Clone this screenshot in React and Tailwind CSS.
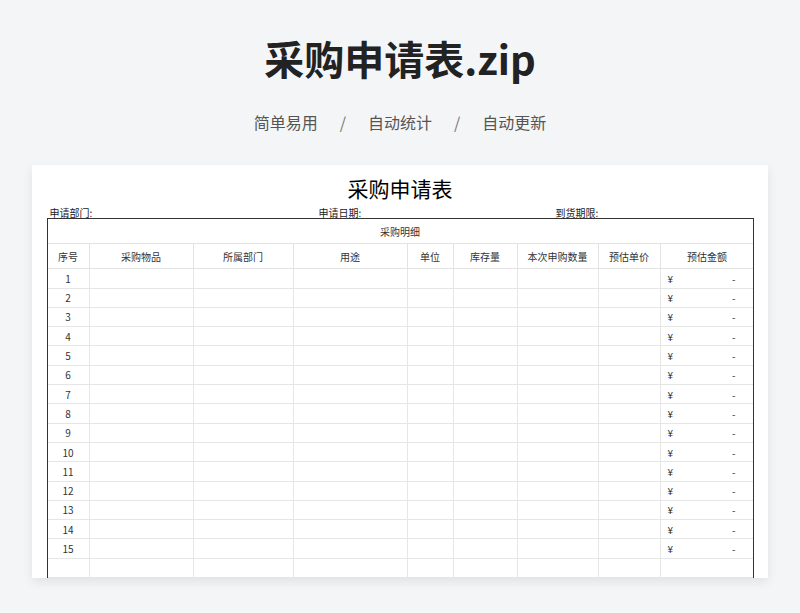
const cols = [
  { label: '序号', w: 42 },
  { label: '采购物品', w: 104 },
  { label: '所属部门', w: 100 },
  { label: '用途', w: 114 },
  { label: '单位', w: 46 },
  { label: '库存量', w: 64 },
  { label: '本次申购数量', w: 81 },
  { label: '预估单价', w: 62 },
  { label: '预估金额', w: 93 },
];

const rows = Array.from({ length: 16 }, (_, i) => i + 1);

export default function App() {
  return (
    <div
      className="w-[800px] h-[613px] overflow-hidden bg-[#f4f5f7] flex flex-col items-center"
      style={{ fontFamily: '"Noto Sans CJK SC", "Noto Sans", sans-serif' }}
    >
      <h1 className="mt-[32px] h-[52px] text-[40px] leading-[52px] font-bold text-[#222]">采购申请表.zip</h1>
      <div className="mt-[26px] flex items-center gap-[22px] text-[16px] leading-[24px] text-[#555]">
        <span>简单易用</span>
        <span className="text-[#777]">/</span>
        <span>自动统计</span>
        <span className="text-[#777]">/</span>
        <span>自动更新</span>
      </div>
      <div className="mt-[31px] w-[736px] h-[413px] bg-white shadow-[0_4px_10px_rgba(0,0,0,0.08)] flex flex-col items-center overflow-hidden">
        <div className="mt-[8px] h-[30px] text-[21px] leading-[30px] text-black">采购申请表</div>
        <div className="w-[707px] h-[19px] relative text-[10px] leading-[19px] text-[#222]">
          <span className="absolute left-[3px]">申请部门:</span>
          <span className="absolute left-[272px]">申请日期:</span>
          <span className="absolute left-[509px]">到货期限:</span>
        </div>
        <div className="mt-[1px] w-[707px] border-x border-t border-[#333] text-[10px] text-[#333]">
          <div className="h-[25px] flex items-center justify-center border-b border-[#e3e3e3]">采购明细</div>
          <div className="flex h-[25px] border-b border-[#e3e3e3]">
            {cols.map((c, i) => (
              <div
                key={c.label}
                className={`flex items-center justify-center shrink-0 ${i < cols.length - 1 ? 'border-r border-[#e3e3e3]' : ''}`}
                style={{ width: c.w }}
              >
                {c.label}
              </div>
            ))}
          </div>
          {rows.map((n) => (
            <div key={n} className="flex h-[19.3px] border-b border-[#e6e6e6]">
              {cols.map((c, i) => (
                <div
                  key={c.label}
                  className={`flex items-center shrink-0 ${i < cols.length - 1 ? 'border-r border-[#e6e6e6]' : ''} ${i === 0 ? 'justify-center' : ''} ${i === 8 ? 'justify-between pl-[7px] pr-[18px]' : ''}`}
                  style={{ width: c.w }}
                >
                  {i === 0 && n <= 15 ? n : null}
                  {i === 8 && n <= 15 ? (
                    <>
                      <span>¥</span>
                      <span>-</span>
                    </>
                  ) : null}
                </div>
              ))}
            </div>
          ))}
        </div>
      </div>
    </div>
  );
}
